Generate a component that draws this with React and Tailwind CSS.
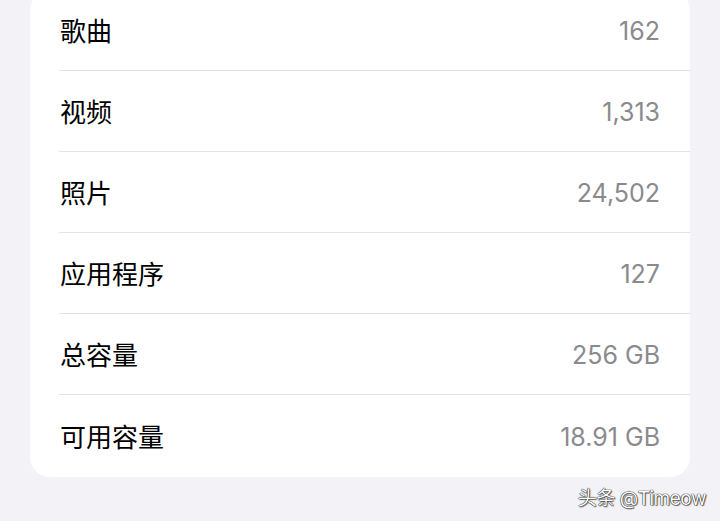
import React from "react";

const rows = [
  { label: "歌曲", value: "162" },
  { label: "视频", value: "1,313" },
  { label: "照片", value: "24,502" },
  { label: "应用程序", value: "127" },
  { label: "总容量", value: "256 GB" },
  { label: "可用容量", value: "18.91 GB" },
];

export default function App() {
  return (
    <div
      className="w-[720px] h-[521px] overflow-hidden bg-[#f2f2f7] px-[30px]"
      style={{ fontFamily: 'Inter, "Noto Sans CJK SC", sans-serif' }}
    >
      <div className="-mt-[10px] bg-white rounded-[20px]">
        {rows.map((row, i) => (
          <div key={row.label} className="pl-[29px]">
            <div
              className={`h-[81px] flex items-center justify-between pr-[30px] pt-[3px] ${
                i < rows.length - 1 ? "border-b border-[#e3e3e6]" : "h-[82px]"
              }`}
            >
              <span className="text-[26px] leading-none text-black pl-px">{row.label}</span>
              <span className="text-[25px] leading-none text-[#8a8a8e]">{row.value}</span>
            </div>
          </div>
        ))}
      </div>
      <div className="flex justify-end -mr-[16px] mt-[8px]">
        <span className="text-[19px] text-white tracking-tight [text-shadow:0_0_1px_#000,0_0_1px_#000,1px_1px_1px_rgba(0,0,0,0.5)]">
          头条 @Timeow
        </span>
      </div>
    </div>
  );
}
